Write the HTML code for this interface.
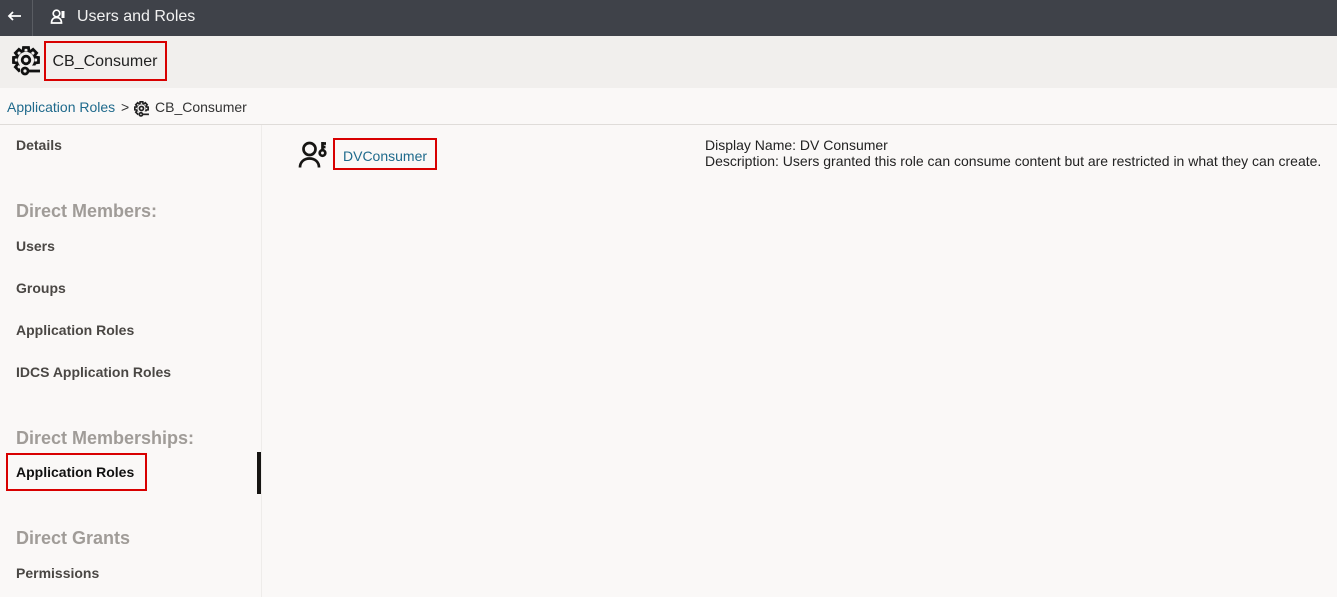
<!DOCTYPE html>
<html><head><meta charset="utf-8"><style>
html,body{margin:0;padding:0;width:1337px;height:597px;overflow:hidden;background:#faf8f7;font-family:"Liberation Sans",sans-serif}
.a{position:absolute;white-space:nowrap}
.nav{font-size:14px;font-weight:bold;color:#4a4744;left:16px;line-height:16px}
.h{font-size:18px;font-weight:bold;color:#a09c98;left:16px;line-height:20px}
.red{position:absolute;border:2px solid #d80000;box-sizing:border-box}
</style></head><body>
<div class="a" style="left:0;top:0;width:1337px;height:36px;background:#3f4249"></div>
<div class="a" style="left:32px;top:0;width:1px;height:36px;background:#5a5d63"></div>
<svg class="a" style="left:7px;top:9px" width="16" height="14" viewBox="0 0 16 14"><path d="M14 7H2M6 3L2 7l4 4" fill="none" stroke="#fff" stroke-width="1.800"/></svg>
<svg class="a" style="left:49px;top:8px" width="18" height="16" viewBox="0 0 18 16" fill="none" stroke="#fff" stroke-width="1.700"><circle cx="7.500" cy="5.500" r="3.300"/><path d="M2.500 15c0-3.500 2-5.500 5-5.500s5 2 5 5.500z"/><path d="M14 3v7" stroke-width="3"/></svg>
<div class="a" style="left:77px;top:7px;font-size:16px;line-height:20px;color:#f2f2f2">Users and Roles</div>
<div class="a" style="left:0;top:36px;width:1337px;height:52px;background:#f1efed"></div>
<svg class="a" style="left:12px;top:46px" width="30" height="30" viewBox="0 0 30 30" fill="none" stroke="#111" stroke-width="2.800"><circle cx="14" cy="14" r="9.500"/><g fill="#f1efed"><path d="M11 5.500L11.500 1.500H16.500L17 5.500"/><path d="M11 5.500L11.500 1.500H16.500L17 5.500" transform="rotate(45 14 14)"/><path d="M11 5.500L11.500 1.500H16.500L17 5.500" transform="rotate(90 14 14)"/><path d="M11 5.500L11.500 1.500H16.500L17 5.500" transform="rotate(-45 14 14)"/><path d="M11 5.500L11.500 1.500H16.500L17 5.500" transform="rotate(-90 14 14)"/><path d="M11 5.500L11.500 1.500H16.500L17 5.500" transform="rotate(-135 14 14)"/></g><path d="M8 22.500H24" stroke="#f1efed" stroke-width="6"/><circle cx="14" cy="14" r="3.800"/><circle cx="13" cy="25" r="3"/><path d="M16 25h12"/></svg>
<div class="a" style="left:52.500px;top:52px;font-size:16px;line-height:19px;color:#222">CB_Consumer</div>
<div class="red" style="left:44px;top:41px;width:123px;height:40px"></div>
<div class="a" style="left:7px;top:99px;font-size:14px;line-height:16px;color:#1f6a8c">Application Roles</div>
<div class="a" style="left:121px;top:99px;font-size:14px;line-height:16px;color:#333">&gt;</div>
<svg class="a" style="left:134px;top:101px" width="16" height="16" viewBox="0 0 30 30" fill="none" stroke="#222" stroke-width="3.200"><circle cx="14" cy="14" r="9.500"/><g fill="#faf8f7"><path d="M11 5.500L11.500 1.500H16.500L17 5.500"/><path d="M11 5.500L11.500 1.500H16.500L17 5.500" transform="rotate(45 14 14)"/><path d="M11 5.500L11.500 1.500H16.500L17 5.500" transform="rotate(90 14 14)"/><path d="M11 5.500L11.500 1.500H16.500L17 5.500" transform="rotate(-45 14 14)"/><path d="M11 5.500L11.500 1.500H16.500L17 5.500" transform="rotate(-90 14 14)"/><path d="M11 5.500L11.500 1.500H16.500L17 5.500" transform="rotate(-135 14 14)"/></g><path d="M8 22.500H24" stroke="#faf8f7" stroke-width="6"/><circle cx="14" cy="14" r="3.800"/><circle cx="13" cy="25" r="3"/><path d="M16 25h12"/></svg>
<div class="a" style="left:155px;top:99px;font-size:14px;line-height:16px;color:#333">CB_Consumer</div>
<div class="a" style="left:0;top:124px;width:1337px;height:1px;background:#dfdcd9"></div>
<div class="a" style="left:261px;top:125px;width:1px;height:472px;background:#eeecea"></div>
<div class="a nav" style="top:137px">Details</div>
<div class="a h" style="top:201px">Direct Members:</div>
<div class="a nav" style="top:238px">Users</div>
<div class="a nav" style="top:280px">Groups</div>
<div class="a nav" style="top:322px">Application Roles</div>
<div class="a nav" style="top:364px">IDCS Application Roles</div>
<div class="a h" style="top:428px">Direct Memberships:</div>
<div class="a nav" style="top:464px;color:#111">Application Roles</div>
<div class="red" style="left:6px;top:453px;width:141px;height:38px"></div>
<div class="a" style="left:257px;top:452px;width:4px;height:42px;background:#161513"></div>
<div class="a h" style="top:528px">Direct Grants</div>
<div class="a nav" style="top:565px">Permissions</div>
<svg class="a" style="left:298px;top:140px" width="30" height="30" viewBox="0 0 30 30" fill="none" stroke="#161513" stroke-width="2.700"><circle cx="11.500" cy="9" r="6"/><path d="M2 27.500C2 22 6 18.500 11.500 18.500S21 22 21 27.500"/><circle cx="24.500" cy="13" r="2.800"/><path d="M24.500 10V2M24.500 3.500h3.500M24.500 7h3"/></svg>
<div class="a" style="left:343px;top:148px;font-size:14px;line-height:16px;color:#1f6a8c">DVConsumer</div>
<div class="red" style="left:333px;top:138px;width:104px;height:32px"></div>
<div class="a" style="left:705px;top:137px;font-size:14px;line-height:16px;color:#222">Display Name: DV Consumer<br>Description: Users granted this role can consume content but are restricted in what they can create.</div>
</body></html>
